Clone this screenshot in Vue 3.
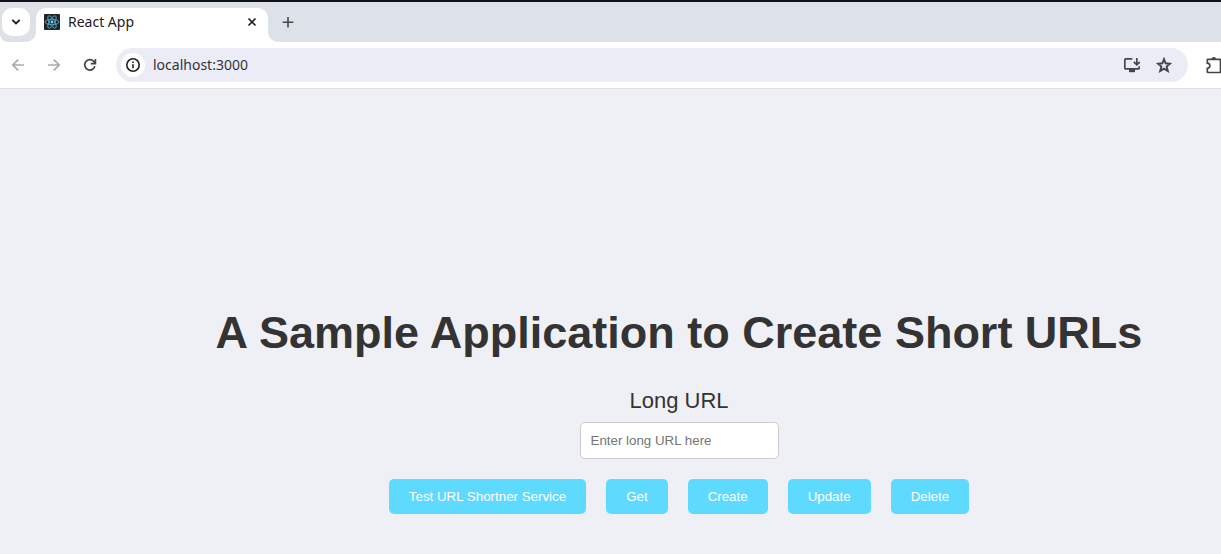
<script setup>
import { ref } from 'vue'

const address = ref('localhost:3000')
const longUrl = ref('')
const actions = ['Test URL Shortner Service', 'Get', 'Create', 'Update', 'Delete']
</script>

<template>
  <div class="browser">
    <header>
      <div class="tab-strip">
        <div class="strip-start">
          <button class="tab-search" type="button" aria-label="Search tabs">
            <svg width="10" height="8" viewBox="0 0 10 8"><path d="M1.3 1.8 5 5.5l3.7-3.7" fill="none" stroke="#1f2023" stroke-width="1.9" /></svg>
          </button>
        </div>
        <div class="tab">
          <svg class="favicon" width="16" height="16" viewBox="0 0 16 16">
            <rect width="16" height="16" rx="1" fill="#222528" />
            <g fill="none" stroke="#55b7d2" stroke-width=".8">
              <ellipse cx="8" cy="8" rx="7" ry="2.7" />
              <ellipse cx="8" cy="8" rx="7" ry="2.7" transform="rotate(60 8 8)" />
              <ellipse cx="8" cy="8" rx="7" ry="2.7" transform="rotate(120 8 8)" />
            </g>
            <circle cx="8" cy="8" r="1.4" fill="#61dafb" />
          </svg>
          <span class="tab-title">React App</span>
          <button class="bare close" type="button" aria-label="Close tab">
            <svg width="16" height="16" viewBox="0 0 16 16"><path d="m4.5 4.5 7 7m0-7-7 7" stroke="#1f2023" stroke-width="1.7" /></svg>
          </button>
        </div>
        <div class="strip-end">
          <button class="bare" type="button" aria-label="New tab">
            <svg width="16" height="16" viewBox="0 0 16 16"><path d="M8 3v10.600M2.700 8.300h10.600" stroke="#444746" stroke-width="1.6" /></svg>
          </button>
        </div>
      </div>

      <div class="toolbar">
        <nav class="nav">
          <button class="bare" type="button" aria-label="Back">
            <svg width="16" height="16" viewBox="0 0 16 16"><path d="M14 8H3m5.200-5.400L2.800 8l5.400 5.400" fill="none" stroke="#a9aaac" stroke-width="1.7" /></svg>
          </button>
          <button class="bare" type="button" aria-label="Forward">
            <svg width="16" height="16" viewBox="0 0 16 16"><path d="M2 8h11M7.800 2.600 13.200 8l-5.400 5.400" fill="none" stroke="#a9aaac" stroke-width="1.7" /></svg>
          </button>
          <button class="bare" type="button" aria-label="Reload">
            <svg width="16" height="16" viewBox="0 0 16 16"><path d="M12.900 9.300A5.200 5.200 0 1 1 11.700 4.300L13.400 6M13.400 2v4.600H8.800" fill="none" stroke="#444746" stroke-width="1.7" /></svg>
          </button>
        </nav>
        <div class="address-bar">
          <button class="site-info" type="button" aria-label="View site information">
            <svg width="16" height="16" viewBox="0 0 16 16"><circle cx="8" cy="8" r="6.200" fill="none" stroke="#1f2023" stroke-width="1.6" /><path d="M8 7.200v4M8 4.400v1.500" stroke="#1f2023" stroke-width="1.6" /></svg>
          </button>
          <input v-model="address" class="address" type="text" aria-label="Address" spellcheck="false" />
          <button class="bare" type="button" aria-label="Install app">
            <svg width="16" height="16" viewBox="0 0 16 16">
              <path d="M8.300 1.900H1.800q-1 0-1 1v8q0 1 1 1h12.400q1 0 1-1V9.300" fill="none" stroke="#444746" stroke-width="1.7" />
              <path d="M5 12h6v3.200H5z" fill="#444746" />
              <path d="M12.800 1v6.500M9.800 4.900l3 3 3-3" fill="none" stroke="#444746" stroke-width="1.700" />
            </svg>
          </button>
          <button class="bare" type="button" aria-label="Bookmark this tab">
            <svg width="16" height="16" viewBox="0 0 16 16"><path d="m8 2.200 1.600 4.100 4.500.4-3.500 2.900 1.200 4.400L8 11.600 4.200 14l1.200-4.400-3.500-2.900 4.500-.4z" fill="none" stroke="#444746" stroke-width="1.900" /></svg>
          </button>
        </div>
        <button class="bare extensions" type="button" aria-label="Extensions">
          <svg width="20" height="18" viewBox="0 0 20 18">
            <path d="M2.900 3.300h12q.600 0 .600.600v12q0 .600-.600.600h-12q-.600 0-.600-.600v-3.500c3.400-.3 3.400-4.900 0-5.200V3.900q0-.600.600-.600z" fill="none" stroke="#444746" stroke-width="1.700" />
            <path d="M6.500 3.300a2.300 2.300 0 0 1 4.600 0z" fill="#444746" />
          </svg>
        </button>
      </div>
    </header>

    <main>
      <h1>A Sample Application to Create Short URLs</h1>
      <form @submit.prevent>
        <label for="long-url">Long URL</label>
        <input id="long-url" v-model="longUrl" class="long-url" type="text" placeholder="Enter long URL here" />
        <div class="actions">
          <button v-for="action in actions" :key="action" class="action" type="button">{{ action }}</button>
        </div>
      </form>
    </main>
  </div>
</template>

<style>
body {
  margin: 0;
  background: #eff0f5;
}
</style>

<style scoped>
.browser {
  min-height: 100vh;
  box-sizing: border-box;
  overflow: hidden;
  border-top: 2px solid #111216;
  background: #eff0f5;
}

header {
  background: #fff;
  border-bottom: 1px solid #dfe0e3;
  font: 14px/20px "Noto Sans", sans-serif;
}

button {
  border: 0;
  cursor: pointer;
}

svg {
  display: block;
}

.bare {
  flex: none;
  padding: 0;
  background: none;
}

.tab-strip {
  display: flex;
  height: 40px;
  background: linear-gradient(#dde1e8, #dde1e8) top / 100% 20px no-repeat;
}

.strip-start {
  flex: none;
  box-sizing: border-box;
  width: 36px;
  padding: 6px 0 0 2px;
  background: #dde1e8;
  border-radius: 0 0 10px 8px;
}

.tab-search {
  display: grid;
  place-items: center;
  width: 28px;
  height: 28px;
  padding: 0;
  background: #fff;
  border-radius: 10px;
}

.tab {
  display: flex;
  flex: none;
  align-items: center;
  gap: 8px;
  box-sizing: border-box;
  width: 232px;
  height: 34px;
  margin-top: 6px;
  padding: 0 8px 6px;
  background: #fff;
  border-radius: 10px 10px 0 0;
}

.tab-title {
  flex: 1;
  color: #1f2023;
}

.strip-end {
  display: flex;
  flex: 1;
  align-items: center;
  padding-left: 12px;
  background: #dde1e8;
  border-radius: 0 0 0 10px;
}

.toolbar {
  display: flex;
  align-items: center;
  height: 46px;
}

.nav {
  display: flex;
  flex: none;
  gap: 20px;
  padding: 0 18px 0 10px;
}

.address-bar {
  display: flex;
  flex: 1;
  align-items: center;
  gap: 16px;
  box-sizing: border-box;
  height: 34px;
  min-width: 0;
  padding: 0 16px 0 5px;
  background: #ececf7;
  border-radius: 17px;
}

.site-info {
  display: grid;
  flex: none;
  place-items: center;
  width: 24px;
  height: 24px;
  padding: 0;
  background: #fff;
  border-radius: 50%;
}

.address {
  flex: 1;
  min-width: 0;
  margin-left: -8px;
  padding: 0;
  border: 0;
  outline: 0;
  background: none;
  color: #333438;
  font: inherit;
}

.extensions {
  margin: 0 -4px 0 17px;
}

main {
  display: flex;
  flex-direction: column;
  align-items: center;
  padding: 218px 0 40px 137px;
  color: #333;
  font-family: "Liberation Sans", Arial, sans-serif;
  text-align: center;
}

h1 {
  margin: 0 0 30px;
  font-size: 45px;
  line-height: 52px;
  white-space: nowrap;
}

form {
  display: flex;
  flex-direction: column;
  align-items: center;
}

label {
  margin-bottom: 9px;
  font-size: 22px;
  line-height: 24px;
}

.long-url {
  box-sizing: border-box;
  width: 199px;
  height: 37px;
  padding: 10px;
  border: 1px solid #ccc;
  border-radius: 5px;
  background: #fff;
  font-family: inherit;
}

.actions {
  display: flex;
  gap: 20px;
  margin-top: 20px;
}

.action {
  padding: 10px 20px;
  border-radius: 5px;
  background: #5fdaff;
  color: #fff;
  font-family: inherit;
}
</style>
